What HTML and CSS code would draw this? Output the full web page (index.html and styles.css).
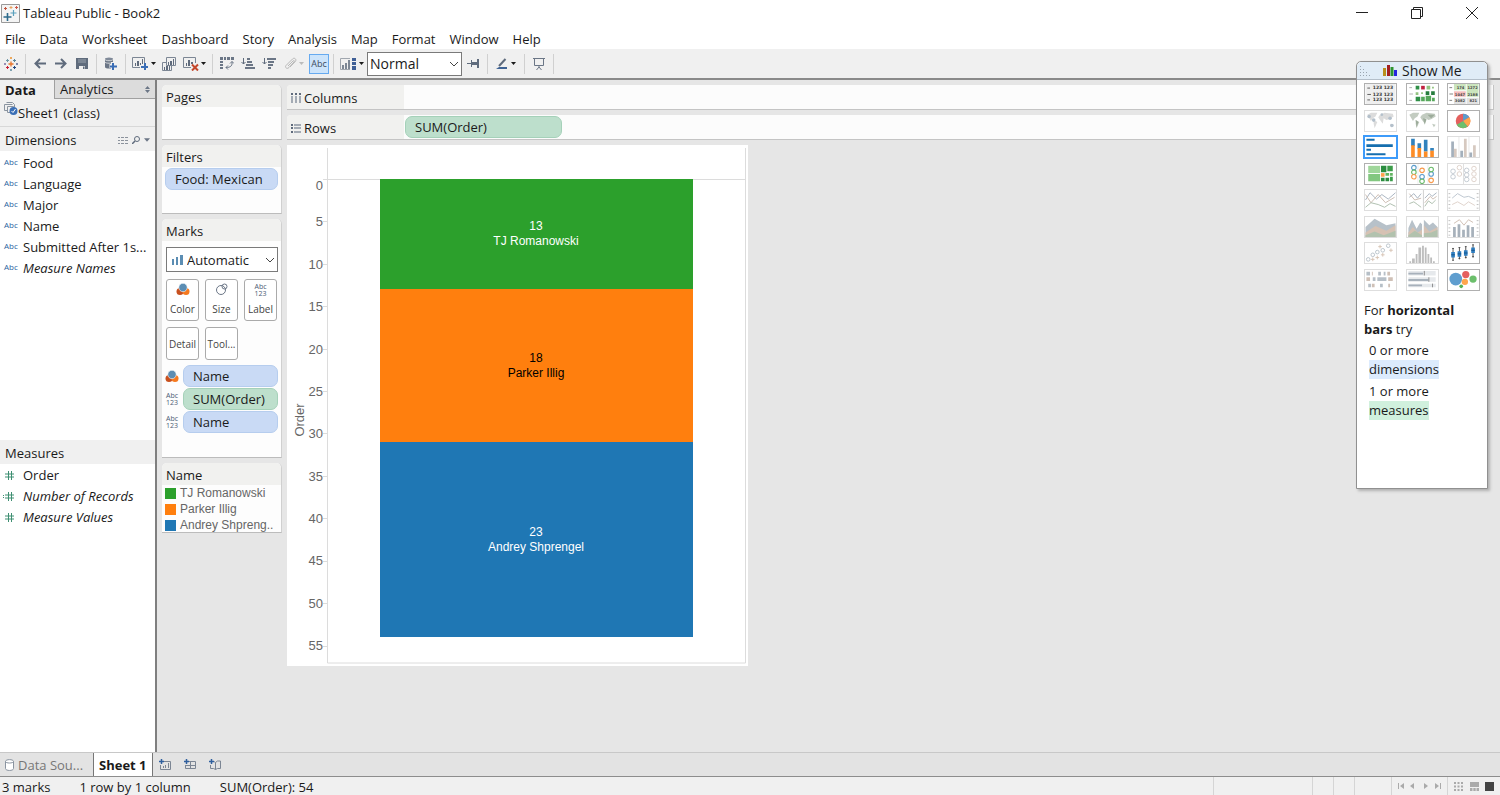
FILE: index.html
```html
<!DOCTYPE html>
<html lang="en">
<head>
<meta charset="utf-8">
<meta name="viewport" content="width=device-width, initial-scale=1">
<title>Tableau Public - Book2</title>
<link rel="stylesheet" href="styles.css">
</head>
<body>
<svg class="defs" width="0" height="0" aria-hidden="true">
  <defs>
    <symbol id="caret" viewBox="0 0 5 3"><path d="M0 0h5L2.500 3z" fill="currentColor"/></symbol>
    <symbol id="chevron" viewBox="0 0 10 6"><path d="M1 1l4 4 4-4" fill="none" stroke="#444"/></symbol>
    <symbol id="hash" viewBox="0 0 13 9"><path d="M5.500 0v9M8.500 0v9M2 3h9M2 6h9" stroke="#3f8f72" fill="none"/></symbol>
    <symbol id="palette" viewBox="0 0 14 13"><circle cx="4" cy="8.500" r="3.500" fill="#c8501e"/><circle cx="10" cy="8.500" r="3.500" fill="#f5791f"/><circle cx="7" cy="4.500" r="4.200" fill="#5b8db3" stroke="#fff" stroke-width=".6"/></symbol>
  </defs>
</svg>

<header class="titlebar">
  <svg class="app-icon" width="19" height="19" viewBox="0 0 19 19"><path d="M.5.500h18v18H.500z" fill="#f4f4f4" stroke="#999"/><path d="M6.500 9v8M2.500 13h8" stroke="#2d6b8c" stroke-width="1.600"/><path d="M12.500 6v6M9.500 9h6" stroke="#5aa0bd" stroke-width="1.200"/><path d="M4.500 3v3M3 4.500h3" stroke="#c2553f"/><path d="M10 2v3M8.500 3.500h3" stroke="#e8a25c"/><path d="M15.500 2v3M14 3.500h3" stroke="#cc5547"/></svg>
  <h1 class="title">Tableau Public - Book2</h1>
  <div class="window-buttons">
    <button class="win" aria-label="Minimize"><svg width="13" height="13"><path d="M0 5.500h12" stroke="#222"/></svg></button>
    <button class="win" aria-label="Restore"><svg width="13" height="13" fill="none" stroke="#222"><path d="M.5 2.500h9v9h-9zM2.500 2V.500h9v9H10"/></svg></button>
    <button class="win" aria-label="Close"><svg width="13" height="13"><path d="M0 0l12 12M12 0L0 12" stroke="#222"/></svg></button>
  </div>
</header>

<nav class="menubar">
  <button>File</button><button>Data</button><button>Worksheet</button><button>Dashboard</button><button>Story</button><button>Analysis</button><button>Map</button><button>Format</button><button>Window</button><button>Help</button>
</nav>

<div class="toolbar" role="toolbar">
  <button class="tool" aria-label="Start page"><svg width="14" height="14" viewBox="0 0 14 14"><path d="M7 4.500v5M4.500 7h5" stroke="#e8762c" stroke-width="1.300"/><path d="M3.500 2v3M2 3.500h3" stroke="#7099a6"/><path d="M10.500 2v3M9 3.500h3" stroke="#59879b"/><path d="M3.500 9v3M2 10.500h3" stroke="#c72035"/><path d="M10.500 9v3M9 10.500h3" stroke="#1f457e"/><path d="M7 0v2M6 1h2" stroke="#eb912c"/><path d="M7 12v2M6 13h2" stroke="#5b879b"/><path d="M1 6v2M0 7h2" stroke="#7b6fa0"/><path d="M13 6v2M12 7h2" stroke="#5b6591"/></svg></button>
  <span class="sep"></span>
  <button class="tool" aria-label="Undo"><svg width="12" height="11" fill="none" stroke="#5f6b7c" stroke-width="2"><path d="M12 5.500H1.500M6 1L1.500 5.500 6 10"/></svg></button>
  <button class="tool" aria-label="Redo"><svg width="12" height="11" fill="none" stroke="#5f6b7c" stroke-width="2"><path d="M0 5.500h10.500M6 1l4.500 4.500L6 10"/></svg></button>
  <button class="tool" aria-label="Save"><svg width="12" height="11"><path d="M0 0h12v11H0z" fill="#5f6b7c"/><path d="M2 1h8v4H2z" fill="#7c8795"/><path d="M3 8h6v3H3z" fill="#eee"/><path d="M7 8.500h1.500V11H7z" fill="#5f6b7c"/></svg></button>
  <span class="sep"></span>
  <button class="tool" aria-label="New data source"><svg width="12" height="13"><path d="M0 2v8c0 2 8 2 8 0V2z" fill="#6b7686"/><ellipse cx="4" cy="2" rx="4" ry="1.500" fill="#7f8998"/><path d="M0 2.500c0 1.600 8 1.600 8 0M0 5c0 1.600 8 1.600 8 0" fill="none" stroke="#eee" stroke-width=".8"/><path d="M8 5v8M4.500 9H12" stroke="#f0f0f0" stroke-width="4"/><path d="M8 6v7M5 9.500h7" stroke="#3a6db5" stroke-width="2"/></svg></button>
  <span class="sep"></span>
  <button class="tool wide" aria-label="New worksheet"><svg width="17" height="14"><path d="M12.500 6V.500H.500v10H8" fill="none" stroke="#7c8694"/><path d="M3 6h1v3H3zM5 4h2v5H5zM8 6h1v2H8zM10 2h1v5h-1z" fill="#5f6b7c"/><path d="M13 6v7M9 10h7" stroke="#3a6db5" stroke-width="2"/></svg><svg class="caret" width="5" height="3"><use href="#caret"/></svg></button>
  <button class="tool" aria-label="Duplicate"><svg width="14" height="14"><path d="M4.500 8.500v-8h9v8zM4 5.500H.500v8h9V9" fill="none" stroke="#7c8694"/><path d="M6 5h1v3H6zM8 4h2v4H8zM11 2h1v6h-1zM2 10h1v3H2zM4 9h2v4H4zM7 9h1v4H7z" fill="#5f6b7c"/></svg></button>
  <button class="tool wide" aria-label="Clear sheet"><svg width="16" height="14"><path d="M12.500 6V.500H.500v10H8" fill="none" stroke="#7c8694"/><path d="M3 6h1v3H3zM5 3h2v6H5zM8 5h2v2H8z" fill="#5f6b7c"/><path d="M9 7.500l6 6M15 7.500l-6 6" stroke="#c4472c" stroke-width="2"/></svg><svg class="caret" width="5" height="3"><use href="#caret"/></svg></button>
  <span class="sep"></span>
  <button class="tool" aria-label="Swap rows and columns"><svg width="14" height="13"><path d="M0 0h3v3H0zM4 0h2v3H4zM7 0h3v3H7zM11 0h3v3h-3zM0 4h3v2H0zM0 7h3v2H0zM0 10h3v2H0z" fill="#6b7686"/><path d="M12 4.500c.5 4-1 6-6 6M10 6.500l2-2 2 2M8 8.500l-2 2 2 2" fill="none" stroke="#6b7686"/></svg></button>
  <button class="tool" aria-label="Sort ascending"><svg width="14" height="12"><path d="M2.500 0v6M.5 4l2 2 2-2" fill="none" stroke="#5f6b7c"/><path d="M6 0h3v2H6zM6 3h5v2H6zM5 6h7v2H5zM4 9h10v2H4z" fill="#6b7686"/></svg></button>
  <button class="tool" aria-label="Sort descending"><svg width="14" height="12"><path d="M2.500 0v6M.5 4l2 2 2-2" fill="none" stroke="#5f6b7c"/><path d="M5 0h9v2H5zM6 3h6v2H6zM6 6h5v2H6zM6 9h3v2H6z" fill="#6b7686"/></svg></button>
  <button class="tool wide dim" aria-label="Group"><svg width="13" height="13" fill="none" stroke="#b8b8b8"><path d="M4 9l5-5c1-1 2 0 1 1L5 10.500C3 12.500.500 10.500 2 8.500L8.500 2c2-2 4.500.500 2.800 2.500L6 10"/></svg><svg class="caret" width="5" height="3"><use href="#caret"/></svg></button>
  <button class="tool abc" aria-pressed="true">Abc</button>
  <span class="sep"></span>
  <button class="tool wide" aria-label="Show cards"><svg width="17" height="12"><path d="M10 .500H.500v11H10" fill="none" stroke="#a0a6ae"/><path d="M2 7h2v4H2zM5 5h2v6H5zM8 2h2v9H8z" fill="#7c8694"/><path d="M12 0h4v3h-4zM12 4h4v3h-4zM12 8h4v4h-4z" fill="#3f5f96"/></svg><svg class="caret" width="5" height="3"><use href="#caret"/></svg></button>
  <label class="select-box fit"><select aria-label="Fit"><option>Normal</option></select><svg width="10" height="6"><use href="#chevron"/></svg></label>
  <button class="tool" aria-label="Fix axes"><svg width="12" height="9"><path d="M0 4.500h5" stroke="#5f6b7c"/><path d="M4 1h1v2h5V0h2v9h-2V6H5v2H4z" fill="#5f6b7c"/></svg></button>
  <span class="sep"></span>
  <button class="tool wide" aria-label="Highlight"><svg width="13" height="12"><path d="M3 8L9.500 1" stroke="#5f6b7c" stroke-width="2"/><path d="M0 11l3-2h8v2z" fill="#3f6394"/></svg><svg class="caret" width="5" height="3"><use href="#caret"/></svg></button>
  <span class="sep"></span>
  <button class="tool" aria-label="Presentation mode"><svg width="12" height="12" fill="none" stroke="#6b7686"><path d="M0 .500h12M1.500 1v6.500h9V1M6 8v1M3.500 12L6 9l2.500 3"/></svg></button>
  <span class="sep"></span>
</div>

<main class="workspace">
  <aside class="sidebar">
    <div class="side-tabs">
      <button class="side-tab active">Data</button>
      <button class="side-tab">Analytics<svg width="5" height="9"><path d="M0 4l2.500-3L5 4zM0 5l2.500 3L5 5z" fill="#6b7686"/></svg></button>
    </div>
    <div class="source"><svg width="14" height="14"><path d="M.5 2.500h8M.5 2.500v6h3M2.500.500h6l2 2v3M3.500 4.500h6v6h-6z" fill="none" stroke="#8a94a0"/><circle cx="9.500" cy="9" r="4" fill="#3b6fb6"/><path d="M7.500 9l1.500 1.500L11.500 7" fill="none" stroke="#fff"/></svg><span>Sheet1 (class)</span></div>
    <h2 class="side-head"><span>Dimensions</span>
      <svg width="10" height="8"><path d="M0 1.500h2M3 1.500h3M7 1.500h3M0 4.500h2M3 4.500h3M7 4.500h3M0 7.500h2M3 7.500h3M7 7.500h3" stroke="#8b929c"/></svg>
      <svg width="8" height="8" fill="none" stroke="#5f6b7c"><circle cx="5" cy="3" r="2.500"/><path d="M3 5L0 8" stroke-width="1.500"/></svg>
      <svg class="caret-grey" width="6" height="4"><use href="#caret"/></svg></h2>
    <ul class="fields">
      <li><span class="abc-tag">Abc</span>Food</li>
      <li><span class="abc-tag">Abc</span>Language</li>
      <li><span class="abc-tag">Abc</span>Major</li>
      <li><span class="abc-tag">Abc</span>Name</li>
      <li><span class="abc-tag">Abc</span>Submitted After 1s...</li>
      <li class="generated"><span class="abc-tag">Abc</span>Measure Names</li>
    </ul>
    <h2 class="side-head"><span>Measures</span></h2>
    <ul class="fields">
      <li><svg class="hash" width="13" height="9"><use href="#hash"/></svg>Order</li>
      <li class="generated"><svg class="hash" width="13" height="9"><use href="#hash"/><path d="M0 3.500h1M0 5.500h1" stroke="#3f8f72"/></svg>Number of Records</li>
      <li class="generated"><svg class="hash" width="13" height="9"><use href="#hash"/></svg>Measure Values</li>
    </ul>
  </aside>

  <section class="cards">
    <div class="card pages"><h3>Pages</h3></div>
    <div class="card filters"><h3>Filters</h3><button class="pill blue">Food: Mexican</button></div>
    <div class="card marks">
      <h3>Marks</h3>
      <label class="select-box mark-type"><svg width="11" height="10"><path d="M0 4h2v6H0zM4 2h2v8H4zM8 0h3v10H8z" fill="#5b8db3"/></svg><select aria-label="Mark type"><option>Automatic</option></select><svg width="10" height="6"><use href="#chevron"/></svg></label>
      <div class="mark-buttons">
        <button><svg width="14" height="13"><use href="#palette"/></svg>Color</button>
        <button><svg width="12" height="13" fill="none" stroke="#6b7686"><circle cx="5" cy="7" r="4.500"/><circle cx="8.500" cy="3.500" r="2.500"/></svg>Size</button>
        <button><span class="abc123">Abc<br>123</span>Label</button>
        <button class="short">Detail</button>
        <button class="short">Tool...</button>
      </div>
      <div class="encodings">
        <div><svg width="14" height="13"><use href="#palette"/></svg><button class="pill blue">Name</button></div>
        <div><span class="abc123">Abc<br>123</span><button class="pill green">SUM(Order)</button></div>
        <div><span class="abc123">Abc<br>123</span><button class="pill blue">Name</button></div>
      </div>
    </div>
    <div class="card legend">
      <h3>Name</h3>
      <ul><li><i class="swatch c-green"></i>TJ Romanowski</li><li><i class="swatch c-orange"></i>Parker Illig</li><li><i class="swatch c-blue"></i>Andrey Shpreng..</li></ul>
    </div>
  </section>

  <section class="sheet">
    <div class="shelf"><div class="shelf-name"><svg width="10" height="10"><path d="M0 0h2v2H0zM4 0h2v2H4zM8 0h2v2H8z" fill="#5f6b7c"/><path d="M0 3h2v7H0zM4 3h2v7H4zM8 3h2v7H8z" fill="#a4abb4"/></svg>Columns</div></div>
    <div class="shelf"><div class="shelf-name"><svg width="10" height="9"><path d="M0 0h2v2H0zM0 3h2v2H0zM0 7h2v2H0z" fill="#5f6b7c"/><path d="M3 0h7v2H3zM3 3h7v2H3zM3 7h7v2H3z" fill="#a4abb4"/></svg>Rows</div><button class="pill green">SUM(Order)</button></div>
    <svg class="chart" width="461" height="521" viewBox="0 0 461 521" role="img" aria-label="Stacked bar of Order by Name">
      <path d="M40.500 3v515h418V3M40.500 34.500h418" fill="none" stroke="#dcdcdc"/>
      <path d="M36 34.500h5M36 76.500h5M36 119.500h5M36 161.500h5M36 204.500h5M36 246.500h5M36 288.500h5M36 331.500h5M36 373.500h5M36 416.500h5M36 458.500h5M36 501.500h5" stroke="#dcdcdc"/>
      <path d="M93 34h313v110H93z" fill="#2ca02c"/>
      <path d="M93 144h313v153H93z" fill="#ff7f0e"/>
      <path d="M93 297h313v195H93z" fill="#1f77b4"/>
      <g class="axis" text-anchor="end">
        <text x="36" y="45">0</text><text x="36" y="81">5</text><text x="36" y="124">10</text><text x="36" y="166">15</text><text x="36" y="209">20</text><text x="36" y="251">25</text><text x="36" y="293">30</text><text x="36" y="336">35</text><text x="36" y="378">40</text><text x="36" y="420">45</text><text x="36" y="463">50</text><text x="36" y="505">55</text>
      </g>
      <text class="axis" text-anchor="middle" transform="translate(17 275) rotate(-90)">Order</text>
      <g class="mark-label" text-anchor="middle">
        <g fill="#fff"><text x="249" y="85">13</text><text x="249" y="100">TJ Romanowski</text><text x="249" y="391">23</text><text x="249" y="406">Andrey Shprengel</text></g>
        <g fill="#000"><text x="249" y="217">18</text><text x="249" y="232">Parker Illig</text></g>
      </g>
    </svg>
  </section>
</main>

<footer>
  <div class="sheet-tabs">
    <button class="data-source"><svg width="9" height="12" fill="#fff" stroke="#8a94a0"><path d="M.5 2.500v7c0 2.600 8 2.600 8 0v-7C8.500 0 .5 0 .5 2.500c0 2 8 2 8 0"/></svg>Data Sou...</button>
    <button class="sheet-tab">Sheet 1</button>
    <button class="tool add" aria-label="New worksheet"><svg width="12" height="11"><path d="M5 2.500h6.500v8H1.500V6" fill="none" stroke="#7c8694"/><path d="M4.500 7v2M6.500 6v3M9.500 4v5" stroke="#7c8694"/><path d="M2.500 0v5M0 2.500h5" stroke="#2f5f9e" stroke-width="1.500"/></svg></button>
    <button class="tool add" aria-label="New dashboard"><svg width="12" height="11"><path d="M5 2.500h6.500v7H1.500V6M2 6.500h9M6.500 3v6" fill="none" stroke="#7c8694"/><path d="M2.500 0v5M0 2.500h5" stroke="#2f5f9e" stroke-width="1.500"/></svg></button>
    <button class="tool add" aria-label="New story"><svg width="12" height="11"><path d="M5 2.500l1.500 1 2-1.500h3v7.500h-3l-2 1-2-1h-3V6M6.500 3.500v7" fill="none" stroke="#7c8694"/><path d="M2.500 0v5M0 2.500h5" stroke="#2f5f9e" stroke-width="1.500"/></svg></button>
  </div>
  <div class="status">
    <span>3 marks</span><span>1 row by 1 column</span><span>SUM(Order): 54</span>
    <div class="status-cells"><i class="cell wide"></i><i class="cell"></i><i class="cell"></i><i class="cell mid"></i>
      <div class="pager"><button aria-label="First"><svg width="6" height="6"><path d="M0 0h1v6H0zM6 0v6L2 3z" fill="#aaa"/></svg></button><button aria-label="Previous"><svg width="6" height="6"><path d="M4 0v6L0 3z" fill="#aaa"/></svg></button><button aria-label="Next"><svg width="6" height="6"><path d="M1 0v6l4-3z" fill="#aaa"/></svg></button><button aria-label="Last"><svg width="6" height="6"><path d="M5 0h1v6H5zM0 0v6l4-3z" fill="#aaa"/></svg></button></div>
      <div class="views"><button aria-label="Sorter"><svg width="9" height="9"><path d="M0 0h2v2H0zM3.500 0h2v2h-2zM7 0h2v2H7zM0 3.500h2v2H0zM3.500 3.500h2v2h-2zM7 3.500h2v2H7zM0 7h2v2H0zM3.500 7h2v2h-2zM7 7h2v2H7z" fill="#aaa"/></svg></button><button aria-label="Filmstrip"><svg width="9" height="9"><path d="M0 0h9v5H0zM0 6h2.500v3H0zM3.300 6h2.400v3H3.300zM6.500 6H9v3H6.500z" fill="#aaa"/></svg></button><button aria-label="Tabs"><svg width="9" height="9"><path d="M0 0h9v9H0z" fill="#444"/></svg></button></div>
    </div>
  </div>
</footer>

<aside class="show-me">
  <h2><svg class="grip" width="12" height="11"><path d="M.5 1v10M3.500 4v7M6.500 7v4M9.500 10v1" stroke="#9aa5b0" stroke-dasharray="1 2"/></svg><svg width="14" height="11"><path d="M0 3h3v8H0z" fill="#b8901f"/><path d="M4 0h3v11H4z" fill="#a32020"/><path d="M7.500 2h3v9h-3z" fill="#2c9430"/><path d="M11 5h3v6h-3z" fill="#2525e0"/></svg>Show Me</h2>
  <div class="thumbs">
    <button class="thumb on" aria-label="Text table"><svg viewBox="0 0 33 22"><path d="M0 0h33v22H0z" fill="#efefef"/><path d="M2 4.500h3M2 11.500h4M2 17.500h3" stroke="#555"/><g class="tiny"><text x="8" y="6">123</text><text x="20" y="6">123</text><text x="8" y="13">123</text><text x="20" y="13">123</text><text x="8" y="19">123</text><text x="20" y="19">123</text></g></svg></button>
    <button class="thumb on" aria-label="Heat map"><svg viewBox="0 0 33 22"><path d="M2 4h3M2 11h4M2 18h3" stroke="#aaa"/><path d="M9 2h4v4H9zM9 14h5v5H9z" fill="#2f8f47"/><path d="M15 2h4v4h-4z" fill="#c0203f"/><path d="M21 2h4v4h-4zM27 3h2v2h-2zM9 9h3v3H9zM15 9h2v2h-2z" fill="#93c481"/><path d="M20 8h4v4h-4zM26 8h4v4h-4z" fill="#267d3d"/><path d="M15 14h4v5h-4zM20 13h6v6h-6zM27 15h3v4h-3z" fill="#55a75a"/></svg></button>
    <button class="thumb on" aria-label="Highlight table"><svg viewBox="0 0 33 22"><path d="M6 0h13v7H6zM20 0h13v14H20z" fill="#cbe5bd"/><path d="M6 8h13v6H6z" fill="#f5bcbc"/><path d="M6 15h13v7H6zM20 15h13v7H20z" fill="#e1e1e1"/><path d="M1 4h3M1 11h4M1 18h3" stroke="#777"/><g class="nano"><text x="9" y="6">174</text><text x="21" y="6">1272</text><text x="7" y="13">1047</text><text x="21" y="13">2188</text><text x="7" y="20">3082</text><text x="23" y="20">821</text></g></svg></button>
    <button class="thumb" aria-label="Symbol map"><svg viewBox="0 0 33 22"><path d="M2 4l4-2 7 0-2 4-3 2-2 3zM9 10l4 2-3 7-1-5zM16 4l5-2 9 1 1 3-5 3-3 1-3-2-1 6-3-4-2-3zM27 14l4 1-2 3z" fill="#dcdcdc"/><g fill="#b4c0cb"><circle cx="4" cy="6" r="2"/><circle cx="9" cy="10" r="2"/><circle cx="18" cy="4" r="1.500"/><circle cx="27" cy="8" r="2"/><circle cx="29" cy="16" r="2"/></g></svg></button>
    <button class="thumb" aria-label="Map"><svg viewBox="0 0 33 22"><path d="M2 4l4-2 7 0-2 4-3 2-2 3zM9 10l4 2-3 7-1-5zM16 4l5-2 9 1 1 3-5 3-3 1-3-2-1 6-3-4-2-3zM27 14l4 1-2 3z" fill="#c3ccc1"/><path d="M9 10l3 2-2 6zM17 8l4 1-2 6zM22 4l8 0-4 4z" fill="#9dac9b"/></svg></button>
    <button class="thumb on" aria-label="Pie chart"><svg viewBox="0 0 33 22"><circle cx="16" cy="11" r="8" fill="#e4605e"/><path d="M16 11V3a8 8 0 0 1 7 4z" fill="#5b9ccc"/><path d="M16 11l7-4a8 8 0 0 1-2 10z" fill="#ffa64d"/><path d="M16 11l5 6a8 8 0 0 1-12-2z" fill="#6cbf6c"/></svg></button>
    <button class="thumb selected" aria-label="Horizontal bars"><svg viewBox="0 0 33 22"><path d="M1 2h9v2H1zM1 8h29v3H1zM1 13h5v2H1zM1 18h21v2H1z" fill="#156eae"/></svg></button>
    <button class="thumb on" aria-label="Stacked bars"><svg viewBox="0 0 33 22"><path d="M4 2h4v8H4zM11 7h4v6h-4zM18 3h4v13h-4zM25 12h4v3h-4z" fill="#3182bd"/><path d="M4 9h4v13H4zM11 12h4v10h-4zM18 16h4v6h-4zM25 15h4v7h-4z" fill="#fd8d27"/></svg></button>
    <button class="thumb" aria-label="Side-by-side bars"><svg viewBox="0 0 33 22"><path d="M11.500 0v22M22.500 0v22" stroke="#e6e6e6"/><path d="M3 5h3v17H3zM13 15h3v7h-3zM23 17h3v5h-3z" fill="#a4b0bc"/><path d="M6 13h3v9H6zM17 2h3v20h-3zM27 9h3v13h-3z" fill="#d6c9c0"/></svg></button>
    <button class="thumb on" aria-label="Treemap"><svg viewBox="0 0 33 22"><path d="M3 2h13v8H3z" fill="#9fd69a"/><path d="M3 11h13v8H3z" fill="#82c77f"/><path d="M17 2h6v7h-6zM17 15h4v4h-4zM22 15h4v4h-4z" fill="#2a8c3f"/><path d="M24 2h6v6h-6zM27 14h3v5h-3z" fill="#3b9c49"/><path d="M17 10h4v4h-4z" fill="#ffa04d"/><path d="M22 10h4v3h-4zM27 10h3v3h-3z" fill="#62b461"/></svg></button>
    <button class="thumb on" aria-label="Circle views"><svg viewBox="0 0 33 22" fill="none" stroke-width="1.200"><path d="M11.500 0v22M22.500 0v22" stroke="#eee"/><g stroke="#5b9ccc"><circle cx="7" cy="4" r="2.500"/><circle cx="16" cy="14" r="2.500"/><circle cx="26" cy="11" r="2.500"/></g><g stroke="#69b969"><circle cx="7" cy="9" r="2.500"/><circle cx="26" cy="6" r="2.500"/><circle cx="16" cy="19" r="2.500"/></g><g stroke="#f79a4d"><circle cx="7" cy="14" r="2.500"/><circle cx="16" cy="7" r="2.500"/><circle cx="26" cy="18" r="2.500"/></g></svg></button>
    <button class="thumb" aria-label="Side-by-side circles"><svg viewBox="0 0 33 22" fill="none"><path d="M16.500 0v22" stroke="#ddd"/><g stroke="#c0c8d0"><circle cx="5" cy="8" r="2.500"/><circle cx="5" cy="14" r="2.500"/><circle cx="20" cy="7" r="2.500"/><circle cx="20" cy="12" r="2.500"/><circle cx="20" cy="17" r="2.500"/></g><g stroke="#ddd0c8"><circle cx="12" cy="4" r="2.500"/><circle cx="12" cy="11" r="2.500"/><circle cx="28" cy="5" r="2.500"/><circle cx="28" cy="11" r="2.500"/><circle cx="28" cy="17" r="2.500"/></g></svg></button>
    <button class="thumb" aria-label="Lines, continuous"><svg viewBox="0 0 33 22" fill="none"><path d="M0 11l5-8 7 7 6-5 7 5 8-7" stroke="#a3b0bd"/><path d="M0 5l6 9 8-9 8 9 10-6" stroke="#c9b8ad"/><path d="M0 19l6-5 8 2 7 3 6-4 6 3" stroke="#a9bba9"/></svg></button>
    <button class="thumb" aria-label="Lines, discrete"><svg viewBox="0 0 33 22" fill="none"><path d="M17.500 0v22" stroke="#ccc"/><path d="M2 8l5-4 4 5 4-5M19 9l5-5 3 3 5-4" stroke="#a3b0bd"/><path d="M2 4l6 7 7-2M19 14l6-7 3 3 4-3" stroke="#c9b8ad"/><path d="M2 15l5-2 4 3 4 3M19 18l4-6 4 3 4-4" stroke="#a9bba9"/></svg></button>
    <button class="thumb" aria-label="Dual lines"><svg viewBox="0 0 33 22" fill="none"><path d="M4 9l6-5 7 4 5-1 7 3" stroke="#b8c2cc"/><path d="M4 16l6-3 7 4 5-4 7 4" stroke="#ddd0c8"/><path d="M0 4h2M0 8h2M0 12h2M0 16h2M0 20h2M31 4h2M31 8h2M31 12h2M31 16h2M31 20h2" stroke="#bbb"/></svg></button>
    <button class="thumb" aria-label="Area, continuous"><svg viewBox="0 0 33 22"><path d="M0 11l10-9 13 7 10-2v15H0z" fill="#b7c1c9"/><path d="M0 17l11-7 12 5 10-6v13H0z" fill="#d6c2b3"/><path d="M0 20l10-4 10 4 13-5v7H0z" fill="#b2c2ae"/></svg></button>
    <button class="thumb" aria-label="Area, discrete"><svg viewBox="0 0 33 22"><path d="M1 12l4-9 5 10 4-7 2 2v14H1zM18 3l6 6 4-3 5 5v11H18z" fill="#b7c1c9"/><path d="M1 17l5-6 5 6 5-3v8H1zM18 9l6 7 9-5v11H18z" fill="#d6c2b3"/><path d="M1 20l7-5 8 5v2H1zM18 18l8-1 7-3v8H18z" fill="#b2c2ae"/></svg></button>
    <button class="thumb" aria-label="Dual combination"><svg viewBox="0 0 33 22"><path d="M5 11h3v11H5zM10 8h3v14h-3zM15 14h3v8h-3zM20 9h3v13h-3zM25 11h3v11h-3z" fill="#a7b1bb"/><path d="M6 7l6-4 5 6 5-6 5 3" fill="none" stroke="#cdbcb0"/><path d="M0 4h2M0 8h2M0 12h2M0 16h2M0 20h2M31 4h2M31 8h2M31 12h2M31 16h2M31 20h2" stroke="#bbb"/></svg></button>
    <button class="thumb" aria-label="Scatter plot"><svg viewBox="0 0 33 22" fill="none"><g stroke="#b7c1c9"><circle cx="3" cy="18" r="2"/><circle cx="8" cy="13" r="2"/><circle cx="13" cy="10" r="2"/><circle cx="19" cy="8" r="2"/><circle cx="25" cy="3" r="2"/></g><path d="M8 16v4M6 18h4M13 14v4M11 16h4M19 11v4M17 13h4M16 2v4M14 4h4M28 6v4M26 8h4" stroke="#d6c2b3"/></svg></button>
    <button class="thumb" aria-label="Histogram"><svg viewBox="0 0 33 22"><path d="M2 20h2v2H2zM5 17h3v5H5zM9 12h2v10H9zM12 5h3v17h-3zM16 3h2v19h-2zM19 5h2v17h-2zM22 12h2v10h-2zM25 16h2v6h-2zM28 20h2v2h-2z" fill="#bdbdbd"/></svg></button>
    <button class="thumb on" aria-label="Box plot"><svg viewBox="0 0 33 22"><path d="M5 6v13M12 5v13M19 4v13M27 2v14M4 6h2M4 19h2M11 5h2M11 17h2M18 4h2M18 16h2M26 2h2M26 15h2" stroke="#444"/><path d="M3 10h4v6H3zM10 9h4v6h-4zM17 8h4v6h-4zM25 5h4v6h-4z" fill="#2f7ec0"/><path d="M3 13h4M10 12h4M17 11h4M25 8h4" stroke="#124f86"/></svg></button>
    <button class="thumb" aria-label="Gantt"><svg viewBox="0 0 33 22"><path d="M1 2h4v4H1zM14 2h3v4h-3zM20 2h2v4h-2zM8 8h3v4H8zM13 8h10v4H13zM3 15h3v4H3zM16 15h3v4h-3z" fill="#b6bfc7"/><path d="M7 2h1v4H7zM24 2h3v4h-3zM1 8h4v4H1zM25 8h5v4h-5zM7 15h3v4H7zM25 15h2v4h-2z" fill="#cfc0b6"/></svg></button>
    <button class="thumb" aria-label="Bullet graph"><svg viewBox="0 0 33 22"><path d="M1 1h30v5H1zM1 8h30v5H1zM1 15h30v4H1z" fill="#e6e9ec"/><path d="M1 3h16v2H1zM1 10h22v2H1zM1 16h15v2H1z" fill="#a7b1bb"/><path d="M18.500 1v5M23.500 8v5M27.500 15v4" stroke="#888"/></svg></button>
    <button class="thumb on" aria-label="Packed bubbles"><svg viewBox="0 0 33 22"><circle cx="8" cy="10" r="7" fill="#5f9ecf"/><circle cx="19" cy="5" r="4" fill="#e4605e"/><circle cx="18" cy="13" r="3.500" fill="#ffa64d"/><circle cx="27" cy="10" r="4" fill="#6cbf6c"/><circle cx="14" cy="18" r="2" fill="#55b055"/></svg></button>
  </div>
  <p class="advice">For <b>horizontal bars</b> try</p>
  <dl class="needs"><dt>0 or more</dt><dd class="dims">dimensions</dd><dt>1 or more</dt><dd class="meas">measures</dd></dl>
</aside>
</body>
</html>
```
FILE: styles.css
```css
* { box-sizing: border-box; }
body {
  margin: 0;
  min-height: 100vh;
  display: flex;
  flex-direction: column;
  position: relative;
  font: 13px/20px "Open Sans", "Noto Sans", sans-serif;
  color: #1a1a1a;
  background: #fff;
}
h1, h2, h3, ul, p, dl, dd { margin: 0; padding: 0; font-weight: 400; font-size: 13px; }
ul { list-style: none; }
button, select { font: inherit; color: inherit; background: none; border: 0; padding: 0; margin: 0; }
svg { flex: none; }
.defs { position: absolute; }

.titlebar { display: flex; align-items: center; gap: 3px; height: 26px; padding-left: 1px; }
.title { flex: 1; }
.window-buttons { display: flex; }
.win { width: 55px; height: 26px; display: flex; align-items: center; justify-content: center; }

.menubar { display: flex; gap: 14px; height: 23px; padding: 3px 5px 0; }
.toolbar {
  display: flex; align-items: center; gap: 1px;
  height: 31px; padding-left: 1px;
  background: #f0f0f0; border-bottom: 2px solid #8a8a8a;
}
.tool { width: 20px; height: 20px; display: flex; align-items: center; justify-content: center; }
.tool.wide { width: 28px; gap: 2px; }
.tool.dim { color: #bbb; }
.tool.abc { background: #cce4fb; border: 1px solid #66aaf0; font-size: 9px; color: #3d4c60; }
.sep { width: 1px; height: 20px; margin: 0 3px; background: #d0d0d0; }
.select-box { display: flex; align-items: center; background: #fff; border: 1px solid #7a7a7a; }
.select-box select { appearance: none; flex: 1; min-width: 0; outline: 0; }
.fit { width: 95px; height: 24px; padding: 0 2px; font-size: 14px; }

.workspace { flex: 1; display: flex; background: #e6e6e6; }
.sidebar { width: 157px; display: flex; flex-direction: column; background: #f0f0f0; border-right: 2px solid #7f7f7f; }
.side-tabs { display: flex; height: 19px; }
.side-tab { line-height: 18px; padding: 0 5px; text-align: left; overflow: hidden; }
.side-tab.active { width: 54px; font-weight: 700; }
.side-tab:not(.active) {
  flex: 1; display: flex; align-items: center; justify-content: space-between;
  background: #dcdcdc; border: solid #a0a0a0; border-width: 0 0 1px 1px;
}
.source { display: flex; align-items: center; height: 28px; padding-left: 4px; border-bottom: 1px solid #d8d8d8; }
.source svg { margin-bottom: 8px; }
.side-head { display: flex; align-items: center; gap: 4px; height: 24px; padding: 2px 5px 0; }
.side-head span { flex: 1; }
.caret-grey { color: #6b7686; }
.fields { flex: 1 1 0; background: #fff; padding-top: 1px; }
.fields li { display: flex; align-items: center; height: 21px; padding-left: 4px; white-space: nowrap; }
.generated { font-style: italic; }
.abc-tag { width: 19px; font-size: 8px; line-height: 12px; padding-bottom: 2px; color: #2a5fa0; font-style: normal; }
.hash { margin-right: 7px; margin-left: -1px; }

.cards { width: 130px; padding: 5px; display: flex; flex-direction: column; gap: 5px; }
.card { background: #fdfdfd; border-radius: 5px 5px 0 0; border-bottom: 1px solid #bcbcbc; border-right: 1px solid #d0d0d0; }
.card h3 { height: 22px; padding: 2px 4px 0; background: #f1f1ef; border-radius: 5px 5px 0 0; }
.pages { height: 55px; }
.filters { height: 69px; }
.filters .pill { width: 113px; margin: 1px 3px; }
.marks { height: 239px; }
.legend { height: 70px; }
.pill { height: 22px; border-radius: 7px; border: 1px solid; padding-left: 9px; line-height: 20px; text-align: left; display: block; }
.blue { background: #c9daf5; border-color: #b6cdee; }
.green { background: #bddfcc; border-color: #a5d1b9; }
.mark-type { margin: 6px 3px 7px 4px; height: 25px; padding: 0 2px 0 5px; gap: 4px; }
.mark-buttons { display: grid; grid-template-columns: repeat(3, 33px); gap: 6px; padding: 0 4px; }
.mark-buttons button {
  height: 42px; display: flex; flex-direction: column; align-items: center; justify-content: space-between;
  padding: 3px 0; background: #fff; border: 1px solid #aaa; border-radius: 3px;
  font-size: 10px; line-height: 16px; color: #444;
}
.mark-buttons .short { height: 33px; justify-content: center; }
.abc123 { font-size: 7px; line-height: 7px; color: #4c5c74; text-align: center; }
.encodings { display: flex; flex-direction: column; gap: 1px; padding: 5px 3px 0; }
.encodings div { display: grid; grid-template-columns: 14px 1fr; gap: 4px; align-items: center; }
.legend ul { padding: 0 3px; font: 12px/16px "Liberation Sans", Arial, sans-serif; color: #666; }
.legend li { display: flex; align-items: center; gap: 4px; white-space: nowrap; }
.swatch { width: 11px; height: 11px; }
.c-green { background: #2ca02c; }
.c-orange { background: #ff7f0e; }
.c-blue { background: #1f77b4; }

.sheet { flex: 1; padding: 5px 6px 0 0; }
.shelf { display: flex; align-items: center; height: 25px; margin-bottom: 5px; background: #fcfcfc; border: solid #c4c4c4; border-width: 0 1px 1px 0; border-radius: 4px 0 0 0; }
.shelf-name { width: 117px; height: 24px; display: flex; align-items: center; gap: 3px; padding: 2px 4px 0; background: #f1f1ef; border-radius: 4px 0 0 0; }
.shelf .pill { width: 157px; margin-left: 1px; }
.chart { display: block; background: #fff; font-family: "Liberation Sans", Arial, sans-serif; }
.axis { font-size: 13px; fill: #666; }
.mark-label { font-size: 12px; }

.sheet-tabs { display: flex; height: 25px; background: #e3e3e3; border: solid #8d8d8d; border-width: 1px 0; border-top-color: #c8c8c8; }
.data-source { width: 93px; padding-left: 5px; display: flex; align-items: center; gap: 4px; color: #777; }
.sheet-tab { padding: 0 5px; background: #fff; border: solid #777; border-width: 0 1px; font-weight: 700; }
.add { width: 25px; height: 23px; }
.status { display: flex; gap: 29px; height: 18px; padding-left: 2px; background: #f0f0f0; overflow: hidden; }
.status-cells { margin-left: auto; display: flex; }
.cell { width: 21px; border-left: 1px solid #d5d5d5; }
.cell.wide { width: 99px; }
.cell.mid { width: 37px; }
.pager, .views { display: flex; align-items: center; justify-content: space-evenly; border-left: 1px solid #d5d5d5; }
.pager { width: 56px; }
.views { width: 53px; }
.pager button, .views button { display: flex; }

.show-me {
  position: absolute; top: 61px; right: 12px; width: 132px; height: 428px;
  background: #fff; border: 1px solid #909090; border-radius: 5px 5px 0 0;
  box-shadow: 2px 2px 3px #b0b0b0;
}
.show-me h2 { display: flex; align-items: center; gap: 5px; height: 18px; padding-left: 3px; font-size: 14px; background: #e0ecf7; border-bottom: 1px solid #b4bfca; border-radius: 5px 5px 0 0; }
.show-me .grip { margin-right: 6px; }
.thumbs { display: grid; grid-template-columns: repeat(3, 33px); justify-content: space-between; align-content: space-between; height: 208px; margin: 3px 7px 0; }
.thumb { height: 22px; border: 1px solid #dedede; background: #fff; display: flex; }
.thumb svg { width: 100%; height: 100%; }
.thumb.on { border-color: #b0b0b0; }
.thumb.selected { border-color: #3d9bfa; outline: 1px solid #3d9bfa; }
.tiny { font: 700 5px "DejaVu Sans", sans-serif; fill: #333; }
.nano { font: 700 4px "DejaVu Sans", sans-serif; fill: #444; }
.advice { padding: 10px 7px 0; line-height: 19px; }
.needs { padding: 1px 12px; }
.needs dd { width: fit-content; line-height: 19px; margin-bottom: 2px; }
.dims { background: #dcebfd; }
.meas { background: #d0f0dd; }
```
